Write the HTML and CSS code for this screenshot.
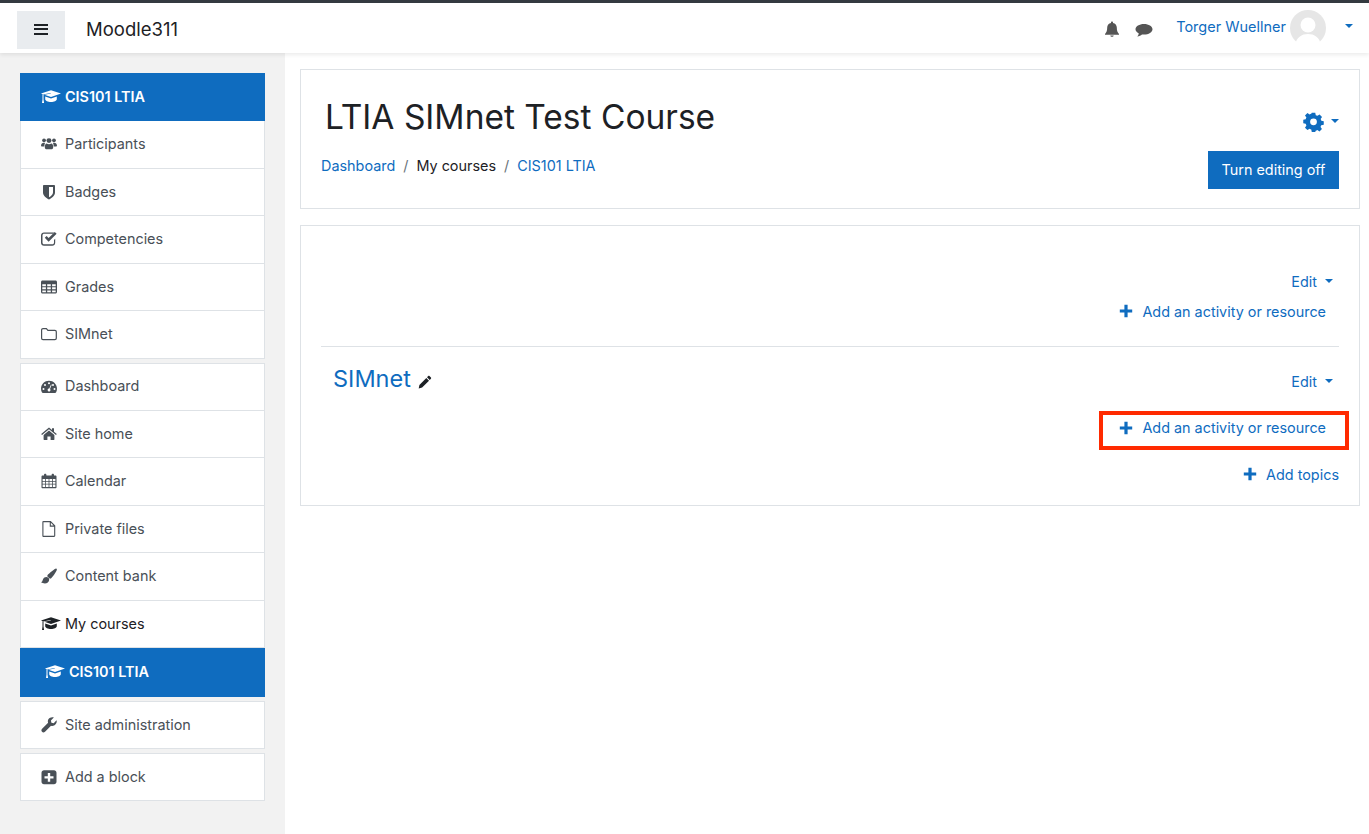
FILE: index.html
```html
<!DOCTYPE html>
<html lang="en">
<head>
<meta charset="utf-8">
<title>LTIA SIMnet Test Course</title>
<link rel="stylesheet" href="styles.css">
</head>
<body>
<svg class="defs" aria-hidden="true">
  <symbol id="i-cap" viewBox="0 0 20 16"><path d="M10 1.2 20 4.6 10 8 3.4 5.8 9.8 4.6 9.6 4 2 5.4 0 4.6z"/><path d="M4.2 7.6 10 9.6l5.8-2v2.6c0 1.6-2.8 2.8-5.8 2.8s-5.800-1.200-5.800-2.800z"/><path d="M1.500 5.600h1v4.800l.6 3.600H1l.5-3.600z"/></symbol>
  <symbol id="i-users" viewBox="0 0 18 16"><circle cx="3.400" cy="3.800" r="2.100"/><circle cx="14.600" cy="3.800" r="2.100"/><circle cx="9" cy="4.200" r="2.800"/><path d="M0 10.200C0 7.500 1.500 6.500 3.200 6.500c.6 0 1 .2 1.300.4-.5 1-.7 2.400-.7 3.800H1c-.6 0-1-.2-1-.5zM18 10.200c0-2.700-1.500-3.700-3.200-3.700-.6 0-1 .2-1.300.4.500 1 .7 2.400.7 3.800H17c.6 0 1-.2 1-.5z"/><path d="M6.400 7.400c.7.500 1.600.8 2.600.8s1.900-.3 2.600-.8c1.500.2 2.100 1.800 2.100 4.200 0 1.500-.8 2.400-2.200 2.400H6.500c-1.400 0-2.200-.9-2.200-2.400 0-2.400.6-4 2.100-4.200z"/></symbol>
  <symbol id="i-shield" viewBox="0 0 16 16"><path fill-rule="evenodd" d="M3 1h10c.5 0 1 .4 1 1v6.500c0 3.300-3.400 5.800-6 6.900-2.600-1.100-6-3.600-6-6.900V2c0-.6.500-1 1-1zm5 2v10.300c1.800-1 4-2.800 4-4.800V3z"/></symbol>
  <symbol id="i-check" viewBox="0 0 16 16"><path d="M3 1.500h9c.4 0 .8.100 1.100.2l-1 1c-.1 0-.1 0-.1 0H3c-.8 0-1.500.7-1.500 1.500v7.500c0 .8.700 1.500 1.500 1.500h8.500c.8 0 1.500-.7 1.500-1.500V9l1.200-1.200v4c0 1.700-1.300 3-3 3H3c-1.700 0-3-1.300-3-3V4.500c0-1.700 1.300-3 3-3z"/><path d="M3.800 6.800 5.600 5l2 2L13.800.9l1.800 1.800-8 8z"/></symbol>
  <symbol id="i-table" viewBox="0 0 16 16"><path fill-rule="evenodd" d="M1.500 1.500h13c.8 0 1.500.7 1.500 1.500v10c0 .8-.7 1.500-1.500 1.500h-13C.7 14.500 0 13.800 0 13V3c0-.8.700-1.500 1.500-1.500zM1.300 5.200v2h3.600v-2zm4.900 0v2h3.600v-2zm4.900 0v2h3.600v-2zM1.300 8.300v2h3.600v-2zm4.900 0v2h3.600v-2zm4.900 0v2h3.600v-2zM1.300 11.400v1.900h3.600v-1.900zm4.900 0v1.900h3.600v-1.900zm4.900 0v1.900h3.600v-1.900z"/></symbol>
  <symbol id="i-folder" viewBox="0 0 16 16"><path fill="none" stroke="currentColor" stroke-width="1.200" d="M2 2.600h3.400l1.500 1.700h7c.8 0 1.400.6 1.400 1.400v6.500c0 .8-.6 1.400-1.400 1.400H2c-.8 0-1.400-.6-1.400-1.400V4c0-.8.600-1.400 1.400-1.400z"/></symbol>
  <symbol id="i-dash" viewBox="0 0 16 16"><path fill-rule="evenodd" d="M8 1.800c4.400 0 8 3.500 8 8 0 1.400-.4 2.700-1 3.800-.2.300-.5.500-.9.500H1.900c-.4 0-.7-.2-.9-.5-.6-1.100-1-2.400-1-3.800 0-4.500 3.600-8 8-8zM8 3.300a1 1 0 1 0 0 2 1 1 0 0 0 0-2zM4 5a1 1 0 1 0 0 2 1 1 0 0 0 0-2zm8 0a1 1 0 1 0 0 2 1 1 0 0 0 0-2zM2.500 9a1 1 0 1 0 0 2 1 1 0 0 0 0-2zm11 0a1 1 0 1 0 0 2 1 1 0 0 0 0-2zM10 5.500 8.300 9.600C7.400 9.500 6.600 10.100 6.600 11c0 .9.700 1.500 1.500 1.500s1.500-.7 1.400-1.500c0-.4-.2-.8-.5-1l1.700-4.200z"/></symbol>
  <symbol id="i-home" viewBox="0 0 16 16"><path d="M8 4.400 13.400 9v4.600c0 .3-.2.500-.5.500H9.600v-3.500H6.400v3.500H3.100c-.3 0-.5-.2-.5-.5V9z"/><path d="M8 1.500l3 2.500V2.200h2v3.500l2.800 2.400-.8 1L8 3.300 1 9.100l-.8-1z"/></symbol>
  <symbol id="i-cal" viewBox="0 0 16 16"><path fill-rule="evenodd" d="M1.500 2.500H3V2c0-.7.500-1.200 1.200-1.200S5.400 1.300 5.400 2v.5h5.200V2c0-.7.500-1.200 1.200-1.200S13 1.300 13 2v.5h1.500c.6 0 1 .5 1 1v10.700c0 .6-.4 1-1 1h-13c-.6 0-1-.4-1-1V3.500c0-.5.400-1 1-1zM1.600 6v2h2.500V6zm3.300 0v2h2.700V6zm3.500 0v2h2.700V6zm3.500 0v2h2.500V6zM1.600 8.800v2h2.500v-2zm3.300 0v2h2.700v-2zm3.500 0v2h2.700v-2zm3.500 0v2h2.500v-2zM1.600 11.600v2.500h2.500v-2.500zm3.300 0v2.500h2.700v-2.500zm3.500 0v2.500h2.700v-2.500zm3.500 0v2.500h2.500v-2.500z"/></symbol>
  <symbol id="i-file" viewBox="0 0 16 16"><path fill="none" stroke="currentColor" stroke-width="1.100" d="M2.500.6h7l4.200 4.200v10c0 .4-.2.600-.6.600H2.500c-.4 0-.6-.2-.6-.6V1.200c0-.4.200-.6.600-.6zM9.300.8v4.300h4.300"/></symbol>
  <symbol id="i-brush" viewBox="0 0 16 16"><path d="M15 .6c.5 0 .9.400.9.900 0 .4-.2.800-.4 1.200-1.300 2.300-3.800 6.200-5.300 7.500-.5.400-1 .7-1.600.4L6.400 8.400C6.200 8 6.300 7.600 6.600 7.100 7.800 5.700 14 .6 15 .6z"/><path d="M5.300 9c1.500 0 3 1.100 2.900 2.700-.1 2.400-2.200 3.700-4.300 3.700-1.400 0-2.900-.4-3.900-1.400.6 0 1.100-.1 1.300-.7.500-1.100.9-4.300 4-4.300z"/></symbol>
  <symbol id="i-wrench" viewBox="0 0 16 16"><path d="M15.700 3.800c.3 2.700-1.800 5.100-4.500 5.100-.4 0-.8-.1-1.200-.2l-6 6c-.9.900-2.200.9-3 .1-.8-.8-.8-2.100.1-3l6-6C6.200 2.900 8 .6 11.300.3c.7-.1 1.300.1 1.500.2L9.900 3.400l.5 2.300 2.300.5 2.800-2.900z"/></symbol>
  <symbol id="i-plus-sq" viewBox="0 0 16 16"><path fill-rule="evenodd" d="M3 1.300h10c1.400 0 2.500 1.100 2.500 2.500v9c0 1.400-1.100 2.500-2.500 2.500H3C1.600 15.300.5 14.200.5 12.800v-9c0-1.400 1.100-2.500 2.500-2.500zM6.800 4v3.200H3.500v2.300h3.300v3.200h2.400V9.500h3.300V7.200H9.200V4z"/></symbol>
  <symbol id="i-plus" viewBox="0 0 14 14"><path d="M5.400.8h3.200v4.600H13.200v3.200H8.600v4.600H5.400V8.600H.8V5.400h4.600z"/></symbol>
  <symbol id="i-pencil" viewBox="0 0 16 16"><path d="M11.700 1.200c.4-.4 1-.4 1.400 0l1.700 1.700c.4.400.4 1 0 1.400l-1.400 1.400-3.100-3.100zM9.500 3.400l3.100 3.100-7.900 7.900L.8 15.300l.8-4z"/></symbol>
  <symbol id="i-gear" viewBox="0 0 22 22"><path fill-rule="evenodd" d="M9 .8h4l.6 2.900c.7.200 1.300.5 1.900.8l2.500-1.600 2.800 2.800-1.600 2.500c.3.600.6 1.200.8 1.900l2.800.6v4l-2.900.6c-.2.700-.5 1.300-.8 1.900l1.600 2.500-2.800 2.800-2.500-1.600c-.6.3-1.200.6-1.900.8L13 23H9l-.6-2.900c-.7-.2-1.300-.5-1.900-.8L4 20.900l-2.800-2.800 1.600-2.500c-.3-.6-.6-1.200-.8-1.900L-.8 13V9l2.800-.6c.2-.7.500-1.300.8-1.900L1.200 4 4 1.200l2.500 1.600c.6-.3 1.200-.6 1.900-.8zM11 7.500a3.900 3.900 0 1 0 0 7.800 3.900 3.900 0 0 0 0-7.800z" transform="translate(1 1) scale(.91)"/></symbol>
  <symbol id="i-bell" viewBox="0 0 16 16"><path d="M8 .5c.6 0 1 .4 1 1v.6c2.300.4 3.800 2.200 3.800 4.500 0 3.500.8 5 2.200 6.400v.8H1v-.8c1.400-1.400 2.200-2.900 2.200-6.400C3.200 4.300 4.700 2.500 7 2.100v-.6c0-.6.400-1 1-1zM6.300 14.500h3.400c0 .9-.8 1.300-1.700 1.300s-1.700-.4-1.700-1.300z"/></symbol>
  <symbol id="i-chat" viewBox="0 0 18 16"><path d="M9 2c4.700 0 8.500 2.300 8.500 5.300S13.700 12.600 9 12.600c-.7 0-1.400-.1-2-.2-1.200 1-2.700 1.700-4.700 2 .7-.8 1.300-1.800 1.500-3C1.800 10.400.5 9 .5 7.300.5 4.300 4.300 2 9 2z"/></symbol>
</svg>

<header class="navbar">
  <div class="nav-left">
    <button class="toggle" type="button" aria-label="Menu"><span class="bars"></span></button>
    <span class="brand">Moodle311</span>
  </div>
  <div class="nav-right">
    <svg class="nav-bell"><use href="#i-bell"/></svg>
    <svg class="nav-chat"><use href="#i-chat"/></svg>
    <a class="user-name">Torger Wuellner</a>
    <span class="avatar">
      <svg viewBox="0 0 36 36"><circle cx="18" cy="18" r="18" fill="#e6e6e6"/><circle cx="18" cy="15" r="7.500" fill="#fff"/><path d="M5 36c1-9 7-12 13-12s12 3 13 12z" fill="#fff"/></svg>
    </span>
    <span class="caret user-caret"></span>
  </div>
</header>

<div class="page">
  <aside class="sidebar">
    <nav class="block">
      <div class="item active"><svg class="ic cap"><use href="#i-cap"/></svg><span class="bold">CIS101 LTIA</span></div>
      <div class="item"><svg class="ic"><use href="#i-users"/></svg>Participants</div>
      <div class="item"><svg class="ic"><use href="#i-shield"/></svg>Badges</div>
      <div class="item"><svg class="ic"><use href="#i-check"/></svg>Competencies</div>
      <div class="item"><svg class="ic"><use href="#i-table"/></svg>Grades</div>
      <div class="item"><svg class="ic"><use href="#i-folder"/></svg>SIMnet</div>
    </nav>
    <nav class="block">
      <div class="item"><svg class="ic"><use href="#i-dash"/></svg>Dashboard</div>
      <div class="item"><svg class="ic"><use href="#i-home"/></svg>Site home</div>
      <div class="item"><svg class="ic"><use href="#i-cal"/></svg>Calendar</div>
      <div class="item"><svg class="ic"><use href="#i-file"/></svg>Private files</div>
      <div class="item"><svg class="ic"><use href="#i-brush"/></svg>Content bank</div>
      <div class="item dark"><svg class="ic cap"><use href="#i-cap"/></svg>My courses</div>
      <div class="item active nested"><svg class="ic cap"><use href="#i-cap"/></svg><span class="bold">CIS101 LTIA</span></div>
    </nav>
    <nav class="block">
      <div class="item"><svg class="ic"><use href="#i-wrench"/></svg>Site administration</div>
    </nav>
    <nav class="block">
      <div class="item"><svg class="ic"><use href="#i-plus-sq"/></svg>Add a block</div>
    </nav>
  </aside>

  <main class="main">
    <section class="card head-card">
      <div class="head-left">
        <h1 class="title">LTIA SIMnet Test Course</h1>
        <div class="crumbs">
          <a>Dashboard</a><span class="sep">/</span><span class="here">My courses</span><span class="sep">/</span><a>CIS101 LTIA</a>
        </div>
      </div>
      <div class="head-right">
        <div class="gear-row"><svg class="gear"><use href="#i-gear"/></svg><span class="caret"></span></div>
        <button class="btn" type="button">Turn editing off</button>
      </div>
    </section>

    <section class="card course-card">
      <div class="section first">
        <div class="edit-row"><a class="edit">Edit<span class="caret"></span></a></div>
        <div class="add-row"><a class="add"><svg class="plus"><use href="#i-plus"/></svg>Add an activity or resource</a></div>
      </div>
      <div class="section second">
        <div class="sec-head">
          <h3 class="sec-title">SIMnet<svg class="pencil"><use href="#i-pencil"/></svg></h3>
          <a class="edit">Edit<span class="caret"></span></a>
        </div>
        <div class="add-row marked"><a class="add"><svg class="plus"><use href="#i-plus"/></svg>Add an activity or resource</a><span class="redbox"></span></div>
      </div>
      <div class="topics-row"><a class="topics"><svg class="plus"><use href="#i-plus"/></svg>Add topics</a></div>
    </section>
  </main>
</div>
</body>
</html>
```

FILE: styles.css
```css
* { box-sizing: border-box; }
html, body { margin: 0; height: 100%; }
body {
  font-family: Inter, "Liberation Sans", Arial, sans-serif;
  font-size: 14.4px;
  line-height: 22.5px;
  color: #1d2125;
  background: #fff;
  overflow: hidden;
}
a { color: #0f6cbf; text-decoration: none; }
.defs { width: 0; height: 0; position: absolute; }
svg { fill: currentColor; display: block; }

.navbar {
  height: 53px;
  border-top: 3px solid #343a40;
  background: #fff;
  display: flex;
  justify-content: space-between;
  align-items: center;
  box-shadow: 0 2px 4px rgba(0, 0, 0, .08);
  position: relative;
  z-index: 2;
  padding: 0 16px 0 17px;
}
.nav-left, .nav-right { display: flex; align-items: center; }
.toggle {
  width: 48px;
  height: 38px;
  margin-top: 3px;
  background: #e9ecef;
  border: 0;
  padding: 0;
  display: flex;
  align-items: center;
  justify-content: center;
}
.bars {
  width: 14px;
  height: 11px;
  border-top: 2.500px solid #1d2125;
  border-bottom: 2.500px solid #1d2125;
  position: relative;
}
.bars::after {
  content: "";
  position: absolute;
  left: 0;
  right: 0;
  top: 1.500px;
  height: 2.500px;
  background: #1d2125;
}
.brand { font-size: 18.500px; margin-left: 21px; margin-top: 3px; }
.nav-right { margin-top: -1px; }
.nav-bell { width: 16px; height: 16px; color: #555; margin-top: 3px; }
.nav-chat { width: 18px; height: 16px; color: #555; margin-left: 15px; margin-top: 4px; }
.user-name { margin-left: 23px; font-size: 14.500px; }
.avatar { width: 36px; height: 36px; margin-left: 4px; margin-top: 0; }
.avatar svg { width: 36px; height: 36px; }
.caret {
  display: inline-block;
  width: 0;
  height: 0;
  border-left: 4.500px solid transparent;
  border-right: 4.500px solid transparent;
  border-top: 4.500px solid #0f6cbf;
}
.user-caret { margin-left: 19px; margin-top: -3px; }

.page { display: flex; height: calc(100% - 53px); }
.sidebar {
  width: 285px;
  flex: none;
  background: #f2f2f2;
  padding: 20px 20px 0;
  display: flex;
  flex-direction: column;
  gap: 4px;
}
.block { display: flex; flex-direction: column; }
.item {
  height: 47.500px;
  padding: 0 20px;
  display: flex;
  align-items: center;
  background: #fff;
  color: #495057;
  border: 1px solid #dee2e6;
  border-top-width: 0;
}
.block > .item:first-child { border-top-width: 1px; height: 48px; }
.item .ic { width: 16px; height: 16px; margin-right: 8px; flex: none; }
.item .cap { width: 20px; margin-right: 4px; }
.item.dark { color: #1d2125; }
.item.active {
  background: #0f6cbf;
  border-color: #0f6cbf;
  color: #fff;
  height: 48px;
}
.item.nested { padding-left: 24px; height: 49px; }
.bold { font-weight: 600; }

.main {
  flex: 1;
  padding: 16px 9px 0 15px;
  display: flex;
  flex-direction: column;
  gap: 16px;
  min-width: 0;
}
.card { border: 1px solid #dee2e6; background: #fff; }

.head-card {
  height: 140px;
  padding: 0 20px;
  display: flex;
  justify-content: space-between;
}
.title {
  margin: 24px 0 0 4px;
  font-size: 33.500px;
  line-height: 46px;
  font-weight: 400;
}
.crumbs { margin-top: 15px; display: flex; align-items: center; }
.sep { margin: 0 8px; color: #6a737b; }
.here { color: #1d2125; }
.head-right { display: flex; flex-direction: column; align-items: flex-end; }
.gear-row { display: flex; align-items: center; gap: 7px; margin-top: 40px; height: 22px; color: #0f6cbf; }
.gear { width: 21px; height: 21px; }
.btn {
  margin-top: 19px;
  height: 37.500px;
  width: 131px;
  padding: 0;
  border: 0;
  background: #0f6cbf;
  color: #fff;
  font: inherit;
}

.course-card { height: 281px; padding: 45px 20px 20px; }
.section.first { border-bottom: 1px solid #dee2e6; height: 76px; }
.edit-row { display: flex; justify-content: flex-end; padding-right: 6px; }
.edit { display: flex; align-items: center; }
.edit .caret { margin-left: 8px; margin-top: -2px; }
.add-row { display: flex; justify-content: flex-end; padding-right: 13px; margin-top: 7px; }
.add, .topics { display: flex; align-items: center; }
.plus { width: 14px; height: 14px; margin-right: 9px; margin-top: -1px; }
.sec-head {
  display: flex;
  justify-content: space-between;
  align-items: center;
  padding: 14px 6px 0 12px;
}
.sec-title {
  margin: 0;
  font-size: 23.500px;
  line-height: 36px;
  font-weight: 400;
  color: #0f6cbf;
  display: flex;
  align-items: center;
}
.sec-head .edit { margin-top: 6px; }
.pencil { width: 14px; height: 14px; color: #1d2125; margin-left: 7px; margin-top: 5px; }
.section.second .add-row { margin-top: 20px; }
.marked { position: relative; }
.redbox {
  position: absolute;
  top: -6px;
  right: -10px;
  width: 250px;
  height: 39px;
  border: 4px solid #ff2a00;
}
.topics-row { display: flex; justify-content: flex-end; margin-top: 24px; }
```
